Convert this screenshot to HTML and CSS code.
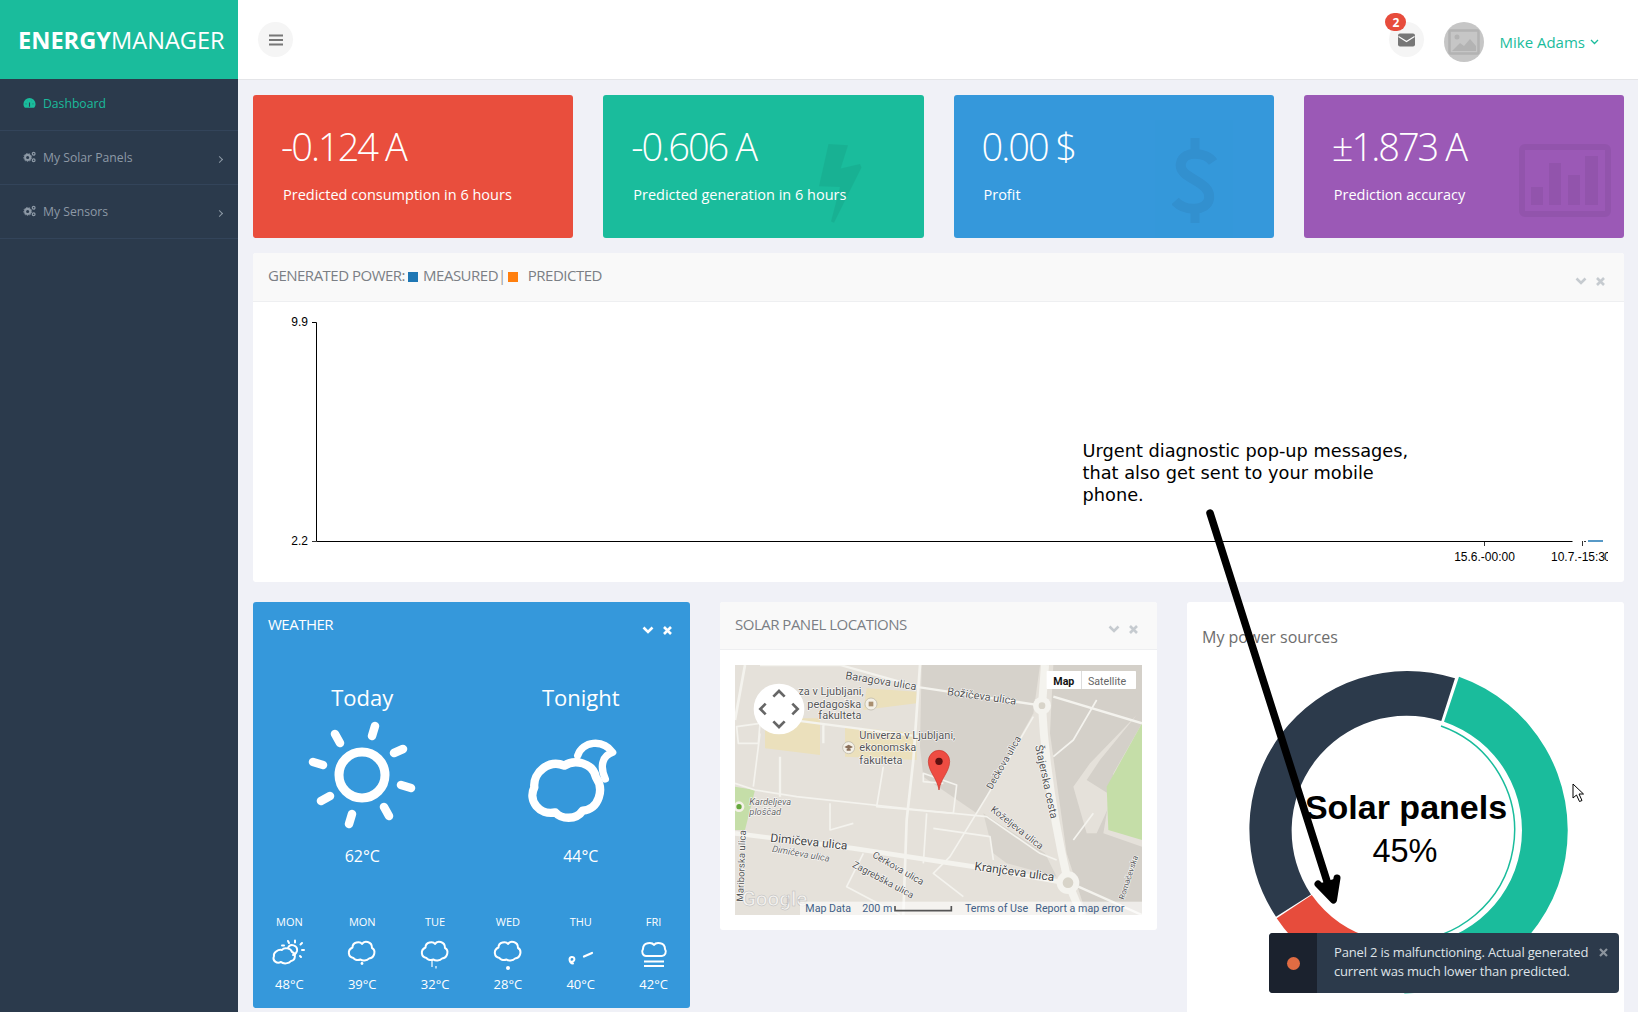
FILE: index.html
```html
<!DOCTYPE html>
<html lang="en">
<head>
<meta charset="utf-8">
<title>Energy Manager</title>
<link rel="stylesheet" href="styles.css">
</head>
<body>
<div class="app">
  <aside class="sidebar">
    <div class="brand"><b>ENERGY</b>MANAGER</div>
    <nav>
      <a class="nav-item active">
        <svg class="nav-icon" viewBox="0 0 14 12"><path d="M7 0.5A6.5 6.5 0 0 0 .5 7c0 1.5.5 2.8 1.3 3.8.2.3.5.4.8.4h8.8c.3 0 .6-.1.8-.4.8-1 1.3-2.3 1.3-3.8A6.500 6.500 0 0 0 7 .5z" fill="#1abc9c"/><path d="M7 10V5.5M3 7h.5M10.500 7h.5M4.500 3.500h.1M9.500 3.500h.1" stroke="#2c3e50" stroke-width="1.200" fill="none"/></svg>
        <span>Dashboard</span>
      </a>
      <a class="nav-item">
        <svg class="nav-icon" viewBox="0 0 14 13"><circle cx="5" cy="7" r="2.800" fill="none" stroke="#8d99a6" stroke-width="2.200"/><circle cx="5" cy="7" r="4.300" fill="none" stroke="#8d99a6" stroke-width="1" stroke-dasharray="1.500 1.500"/><circle cx="11.500" cy="3" r="1.500" fill="none" stroke="#8d99a6" stroke-width="1.300"/><circle cx="11.500" cy="10" r="1.500" fill="none" stroke="#8d99a6" stroke-width="1.300"/></svg>
        <span>My Solar Panels</span><i class="caret"></i>
      </a>
      <a class="nav-item">
        <svg class="nav-icon" viewBox="0 0 14 13"><circle cx="5" cy="7" r="2.800" fill="none" stroke="#8d99a6" stroke-width="2.200"/><circle cx="5" cy="7" r="4.300" fill="none" stroke="#8d99a6" stroke-width="1" stroke-dasharray="1.500 1.500"/><circle cx="11.500" cy="3" r="1.500" fill="none" stroke="#8d99a6" stroke-width="1.300"/><circle cx="11.500" cy="10" r="1.500" fill="none" stroke="#8d99a6" stroke-width="1.300"/></svg>
        <span>My Sensors</span><i class="caret"></i>
      </a>
    </nav>
  </aside>

  <div class="main">
    <header class="topbar">
      <button class="round-btn">
        <svg width="14" height="12" viewBox="0 0 14 12"><path d="M0 1.500h14M0 6h14M0 10.500h14" stroke="#777" stroke-width="2"/></svg>
      </button>
      <div class="top-right">
        <div class="mail">
          <span class="round-btn">
            <svg width="17" height="14" viewBox="0 0 17 14"><rect width="17" height="13" y=".5" rx="2" fill="#777"/><path d="M.5 3.500l8 5 8-5" fill="none" stroke="#fff" stroke-width="1.100"/></svg>
          </span>
          <span class="badge">2</span>
        </div>
        <div class="avatar">
          <svg width="32" height="26" viewBox="0 0 32 26"><rect x="1.500" y="1.500" width="29" height="23" rx="1" fill="none" stroke="#b3b3b3" stroke-width="2.500"/><path d="M4 22l8-8 4 3 6-7 6 7v5z" fill="#b3b3b3"/><circle cx="9" cy="8" r="2.500" fill="#b3b3b3"/></svg>
        </div>
        <div class="user">Mike Adams<svg width="9" height="6" viewBox="0 0 9 6"><path d="M1 1l3.500 3.500L8 1" fill="none" stroke="#1abc9c" stroke-width="1.300"/></svg></div>
      </div>
    </header>

    <div class="content">
      <section class="kpis">
        <div class="kpi red">
          <div class="kpi-val">-0.124 A</div>
          <div class="kpi-lbl">Predicted consumption in 6 hours</div>
        </div>
        <div class="kpi green">
          <svg class="kpi-bg bolt" viewBox="0 0 43 103" preserveAspectRatio="none"><path d="M9.500 0L29 1.600 21.700 32 41 26l1.500 4.600L15 102.600 12 101l9-45-21-1z"/></svg>
          <div class="kpi-val">-0.606 A</div>
          <div class="kpi-lbl">Predicted generation in 6 hours</div>
        </div>
        <div class="kpi blue">
          <svg class="kpi-bg dollar" viewBox="0 0 46 85"><path d="M41 24C34 14 12 12 9 25c-4 16 31 17 28 36-2 12-24 13-34 2" fill="none" stroke="#000" stroke-width="10"/><path d="M23 0v14M23 71v14" stroke="#000" stroke-width="9"/></svg>
          <div class="kpi-val">0.00 $</div>
          <div class="kpi-lbl">Profit</div>
        </div>
        <div class="kpi purple">
          <svg class="kpi-bg bars" viewBox="0 0 92 73"><rect x="3" y="3" width="86" height="67" rx="3" fill="none" stroke="#000" stroke-width="6"/><path d="M12 43h12v18H12zM30 19h12v42H30zM49 31h12v30H49zM66 12h13v49H66z"/></svg>
          <div class="kpi-val">±1.873 A</div>
          <div class="kpi-lbl">Prediction accuracy</div>
        </div>
      </section>

      <section class="panel chart-panel">
        <div class="panel-head">
          <div class="panel-title">GENERATED POWER:<i class="sw sw-blue"></i>MEASURED<span class="sep">|</span><i class="sw sw-orange"></i><span class="pred">PREDICTED</span></div>
          <div class="tools">
            <svg width="12" height="9" viewBox="0 0 12 9"><path d="M1.500 1.500L6 6l4.500-4.500" fill="none" stroke="currentColor" stroke-width="2.600"/></svg>
            <svg width="9" height="9" viewBox="0 0 9 9"><path d="M1 1l7 7M8 1l-7 7" stroke="currentColor" stroke-width="2.600"/></svg>
          </div>
        </div>
        <svg class="chart" width="1371" height="280" viewBox="253 302 1371 280">
          <path d="M312 322.500h4.500V541.500H1572.500" fill="none" stroke="#000" stroke-width="1"/>
          <path d="M312 541.500h4M1484.500 541v5M1582.500 541v5M1584 541.500h2" fill="none" stroke="#000" stroke-width="1" opacity=".8"/>
          <path d="M1588 541h15" stroke="#1f77b4" stroke-width="1.500"/>
          <text class="tick" x="308" y="326" text-anchor="end">9.9</text>
          <text class="tick" x="308" y="545" text-anchor="end">2.2</text>
          <text class="tick" x="1484.500" y="561" text-anchor="middle">15.6.-00:00</text>
          <text class="tick" x="1551" y="561">10.7.-15:3</text>
          <text class="tick" x="1604" y="561">0</text>
          <rect x="1608" y="545" width="16" height="22" fill="#fff"/>
        </svg>
      </section>

      <section class="row3">
        <div class="panel weather">
          <div class="weather-head">
            <div class="weather-title">WEATHER</div>
            <div class="tools tools-white">
              <svg width="12" height="9" viewBox="0 0 12 9"><path d="M1.500 1.500L6 6l4.500-4.500" fill="none" stroke="currentColor" stroke-width="2.600"/></svg>
              <svg width="9" height="9" viewBox="0 0 9 9"><path d="M1 1l7 7M8 1l-7 7" stroke="currentColor" stroke-width="2.600"/></svg>
            </div>
          </div>
          <div class="wx-big">
            <div class="wx-col">
              <div class="wx-name">Today</div>
              <svg class="wx-icon" width="110" height="110" viewBox="-55 -55 110 110" fill="none" stroke="#fff" stroke-linecap="round">
                <circle r="23" stroke-width="9"/>
                <path stroke-width="8.500" d="M10 -39L13 -49M32 -22L41 -26M39 10L49 13M22 32L27 41M-10 39L-13 49M-32 21L-41 26M-39 -10L-49 -13M-22 -32L-27 -41"/>
              </svg>
              <div class="wx-temp">62°C</div>
            </div>
            <div class="wx-col">
              <div class="wx-name">Tonight</div>
              <svg class="wx-icon" width="110" height="110" viewBox="830 363 330 330" fill="none" stroke="#fff" stroke-width="25" stroke-linecap="round" stroke-linejoin="round">
                <path d="M945 500C975 480 1030 490 1040 535C1065 570 1050 630 1000 635C980 665 935 660 918 640C870 650 835 605 855 565C850 520 900 480 945 500Z"/>
                <path stroke-width="22" d="M985 470C1000 425 1060 420 1090 460C1060 470 1050 500 1068 540"/>
              </svg>
              <div class="wx-temp">44°C</div>
            </div>
          </div>
          <div class="wx-days">
            <div class="wx-day">
              <div class="d">MON</div>
              <svg class="wx-mini" viewBox="0 0 36 32" fill="none" stroke="#fff" stroke-width="2" stroke-linecap="round" stroke-linejoin="round">
                <path d="M11 11C13 8 20 9 21 13C25 14 25 21 20 22C18 25 12 25 10 23C6 25 1 22 3 17C2 14 7 10 11 11Z"/>
                <path d="M17 9C19 4 27 6 26 12C25 15 23 16 22 16"/>
                <path d="M11 6.500h2M17 2l1 2M24 1.500v2M31 4l-1.500 1.500M33 11h-2M30 18l-1-1"/>
              </svg>
              <div class="t">48°C</div>
            </div>
            <div class="wx-day">
              <div class="d">MON</div>
              <svg class="wx-mini" viewBox="0 0 36 32" fill="none" stroke="#fff" stroke-width="2" stroke-linejoin="round">
                <path d="M18 5C20 1.500 28 2 28 9C32 11 31 19 25 19.500C23 22 18 22 16.500 20.500C13 22 10 20 9.500 19C4 18 3 11 8.500 8.500C8.500 3 16 2 18 5Z"/>
                <circle cx="18" cy="24.500" r="1.400" fill="#fff" stroke="none"/>
              </svg>
              <div class="t">39°C</div>
            </div>
            <div class="wx-day">
              <div class="d">TUE</div>
              <svg class="wx-mini" viewBox="0 0 36 32" fill="none" stroke="#fff" stroke-width="2" stroke-linejoin="round">
                <path d="M18 5C20 1.500 28 2 28 9C32 11 31 19 25 19.500C23 22 18 22 16.500 20.500C13 22 10 20 9.500 19C4 18 3 11 8.500 8.500C8.500 3 16 2 18 5Z"/>
                <path d="M15 20v8M19 27v2.500" stroke-width="1.200"/>
              </svg>
              <div class="t">32°C</div>
            </div>
            <div class="wx-day">
              <div class="d">WED</div>
              <svg class="wx-mini" viewBox="0 0 36 32" fill="none" stroke="#fff" stroke-width="2" stroke-linejoin="round">
                <path d="M18 5C20 1.500 28 2 28 9C32 11 31 19 25 19.500C23 22 18 22 16.500 20.500C13 22 10 20 9.500 19C4 18 3 11 8.500 8.500C8.500 3 16 2 18 5Z"/>
                <circle cx="18" cy="29" r="2" fill="#fff" stroke="none"/>
              </svg>
              <div class="t">28°C</div>
            </div>
            <div class="wx-day">
              <div class="d">THU</div>
              <svg class="wx-mini" viewBox="0 0 36 32" fill="none" stroke="#fff" stroke-width="2" stroke-linecap="round">
                <path d="M9 22.500C12 23 12.500 17.500 8.500 18C5.500 18.500 6 24 10 24.500"/>
                <path d="M21 17.500L29 14" stroke-width="2.200"/>
              </svg>
              <div class="t">40°C</div>
            </div>
            <div class="wx-day">
              <div class="d">FRI</div>
              <svg class="wx-mini" viewBox="0 0 36 32" fill="none" stroke="#fff" stroke-width="2" stroke-linejoin="round">
                <path d="M18 6C20 3 29 3 29 10C31 13 29 17 26 17H10C7 17 5 13 7 10C7 3 16 3 18 6Z"/>
                <path d="M8 22.500h20M8 27h20"/>
              </svg>
              <div class="t">42°C</div>
            </div>
          </div>
        </div>

        <div class="panel map-panel">
          <div class="panel-head map-head">
            <div class="panel-title">SOLAR PANEL LOCATIONS</div>
            <div class="tools">
              <svg width="12" height="9" viewBox="0 0 12 9"><path d="M1.500 1.500L6 6l4.500-4.500" fill="none" stroke="currentColor" stroke-width="2.600"/></svg>
              <svg width="9" height="9" viewBox="0 0 9 9"><path d="M1 1l7 7M8 1l-7 7" stroke="currentColor" stroke-width="2.600"/></svg>
            </div>
          </div>
          <div class="map-wrap">
            <svg class="map" width="407" height="250" viewBox="45 195 1221 750">
              <rect x="45" y="195" width="1221" height="750" fill="#e5e1da"/>
              <path d="M605 195H960L940 340 800 590 770 640 610 530 600 440z" fill="#d6d2cb"/>
              <path d="M1000 195H1266V370L1180 520 1150 700 1266 740V945H1100L1040 760 990 400z" fill="#d4d0c9"/>
              <path d="M790 640L975 760 1010 830 860 790 820 760z" fill="#d8d4cd"/>
              <path d="M1250 345L1140 480 1100 540 1180 590 1130 700 1100 700 1060 560 1110 490z" fill="#e5e1da"/>
              <path d="M1266 370L1160 560 1165 690 1266 720z" fill="#c5dea8"/>
              <path d="M45 560L105 570 75 690H45z" fill="#c5dea8"/>
              <path d="M135 355H300V465L135 445zM375 380L590 400 590 480 375 470zM440 265L590 275V310L430 330z" fill="#ebe0bc"/>
              <g fill="none" stroke="#f4f3ee" stroke-linejoin="round">
                <path d="M975 195L966 317C975 500 1010 700 1045 850L1085 945" stroke-width="24"/>
                <path d="M45 700L400 745 760 800 1045 850" stroke-width="14"/>
                <path d="M1075 860L1266 945" stroke-width="7"/>
                <path d="M75 195L45 360M600 195L580 480 560 660 550 945" stroke-width="8"/>
                <path d="M120 195H360L600 262 966 317M1000 290L1266 370" stroke-width="7"/>
                <path d="M140 350L600 410M180 470V590M310 370V430" stroke-width="7"/>
                <path d="M45 550L105 570 230 590 600 630 800 650 960 760 1010 780" stroke-width="5"/>
                <path d="M940 350L800 590 690 770 640 820 730 890" stroke-width="5"/>
                <path d="M120 400L100 560M50 380L120 370 115 430H55zM490 500L470 620 700 640 710 555 610 520 610 545 670 550M330 610V690L400 670M620 640L610 790M640 685L810 710 820 780M430 760L380 860 540 945M1060 720L1120 640M1130 300L1060 420 1000 470" stroke-width="5"/>
              </g>
              <g fill="#f4f3ee"><circle cx="966" cy="317" r="27"/><circle cx="1044" cy="848" r="34"/></g>
              <g fill="#d8d4c9"><circle cx="966" cy="317" r="10"/><circle cx="1044" cy="848" r="16"/></g>
              <g class="mt">
                <text x="375" y="237" transform="rotate(9 375 237)">Baragova ulica</text>
                <text x="680" y="285" transform="rotate(8 680 285)">Božičeva ulica</text>
                <text x="235" y="286">za v Ljubljani,</text>
                <text x="262" y="323">pedagoška</text>
                <text x="295" y="358">fakulteta</text>
                <text x="418" y="416">Univerza v Ljubljani,</text>
                <text x="418" y="454">ekonomska</text>
                <text x="418" y="491">fakulteta</text>
                <text x="815" y="570" transform="rotate(-60 815 570)" class="mt-sm">Dečkova ulica</text>
                <text x="945" y="437" transform="rotate(78 945 437)">Štajerska cesta</text>
                <text x="810" y="632" transform="rotate(38 810 632)" class="mt-sm">Koželjeva ulica</text>
                <text x="88" y="615" class="mt-it">Kardeljeva</text>
                <text x="88" y="645" class="mt-it">ploščad</text>
                <text x="150" y="725" transform="rotate(6 150 725)" class="mt-lg">Dimičeva ulica</text>
                <text x="155" y="755" transform="rotate(10 155 755)" class="mt-it">Dimičeva ulica</text>
                <text x="762" y="810" transform="rotate(8 762 810)" class="mt-lg">Kranjčeva ulica</text>
                <text x="455" y="770" transform="rotate(30 455 770)" class="mt-sm">Cerkova ulica</text>
                <text x="395" y="800" transform="rotate(28 395 800)" class="mt-sm">Zagrebška ulica</text>
                <text x="70" y="905" transform="rotate(-88 70 905)" class="mt-sm">Mariborska ulica</text>
                <text x="1212" y="900" transform="rotate(-72 1212 900)" class="mt-xs">Romačevska</text>
              </g>
              <circle cx="453" cy="312" r="18" fill="#f4f1e8" stroke="#b5b0a5" stroke-width="2"/>
              <rect x="446" y="305" width="14" height="14" fill="#a98f70"/>
              <circle cx="386" cy="443" r="18" fill="#f4f1e8" stroke="#b5b0a5" stroke-width="2"/>
              <path d="M373 441l13-7 13 7-13 7zM380 447h12v5h-12z" fill="#8a6f5a"/>
              <circle cx="57" cy="620" r="16" fill="#f4f1e8"/>
              <circle cx="57" cy="620" r="8" fill="#65a83c"/>
              <text class="google" x="65" y="918">Google</text>
              <path d="M657 570C652 535 625 515 625 484A32 33 0 0 1 689 484C689 515 662 535 657 570Z" fill="#ee4c42" stroke="#c9352c" stroke-width="2"/>
              <circle cx="657" cy="484" r="11" fill="#5e1010"/>
              <circle cx="177" cy="327" r="76" fill="#fff"/>
              <path d="M160 290L177 273 194 290M137 311L121 327 137 343M217 311L233 327 217 343M160 364L177 381 194 364" fill="none" stroke="#666" stroke-width="8"/>
              <rect x="980" y="213" width="268" height="54" rx="2" fill="#fff"/>
              <path d="M1084.500 213v54" stroke="#ccc" stroke-width="2"/>
              <text class="mc-b" x="1000" y="254">Map</text>
              <text class="mc" x="1104" y="254">Satellite</text>
              <rect x="240" y="905" width="1026" height="40" fill="#fff" fill-opacity=".6"/>
              <g class="md">
                <text x="256" y="936">Map Data</text>
                <text x="427" y="936">200 m</text>
                <text x="735" y="936">Terms of Use</text>
                <text x="946" y="936">Report a map error</text>
              </g>
              <path d="M525 918v14H694V918" fill="none" stroke="#555" stroke-width="5"/>
            </svg>
          </div>
        </div>

        <div class="panel power">
          <div class="power-title">My power sources</div>
          <svg class="donut" width="437" height="400" viewBox="1187 645 437 400">
            <path fill="#2c3a4b" d="M1276 916.700A158 158 0 0 1 1455 678.300L1441.300 721A115 115 0 0 0 1311 894.500Z"/>
            <path fill="#1abc9c" d="M1459 676.700A163 163 0 0 1 1404.300 993.400V945.200A114.800 114.800 0 0 0 1444 721.700Z"/>
            <path fill="none" stroke="#1abc9c" stroke-width="1.500" d="M1441 726A110.700 110.700 0 0 1 1404.300 941"/>
            <path fill="#e74c3c" d="M1276.700 918.300L1311.700 895A115 115 0 0 0 1375 939L1345 975A158 158 0 0 1 1276.700 918.300Z"/>
            <text class="donut-a" x="1406" y="819" text-anchor="middle">Solar panels</text>
            <text class="donut-b" x="1405" y="862" text-anchor="middle">45%</text>
          </svg>
        </div>
      </section>
    </div>
  </div>
</div>

<div class="note">Urgent diagnostic pop-up messages,<br>that also get sent to your mobile<br>phone.</div>

<svg class="arrow" width="160" height="410" viewBox="1195 500 160 410">
  <path d="M1210 513L1332 897" fill="none" stroke="#000" stroke-width="7.500" stroke-linecap="round"/>
  <path d="M1318 884L1333.500 900 1337 878" fill="none" stroke="#000" stroke-width="7" stroke-linecap="round" stroke-linejoin="round"/>
  <path d="M1318 884L1333.500 900 1337 878z" fill="#000"/>
</svg>

<svg class="cursor" width="13" height="20" viewBox="0 0 13 20"><path d="M1 1v14l3.500-3 3 6.500 2.500-1-3-6.500h4.500z" fill="#fff" stroke="#000" stroke-width="1"/></svg>

<div class="toast">
  <div class="toast-side"><i class="dot"></i></div>
  <div class="toast-body">Panel 2 is malfunctioning. Actual generated current was much lower than predicted.</div>
  <svg class="toast-x" width="9" height="9" viewBox="0 0 9 9"><path d="M1 1l7 7M8 1l-7 7" stroke="#8c949d" stroke-width="2.200"/></svg>
</div>
</body>
</html>
```

FILE: styles.css
```css
* { box-sizing: border-box; }
html, body { margin: 0; height: 1012px; overflow: hidden; }
body { background: #f0f1f7; font-family: "Open Sans", "Liberation Sans", sans-serif; color: #666; position: relative; }
svg { display: block; }

.app { display: flex; height: 1012px; }

/* sidebar */
.sidebar { width: 238px; flex: none; background: #2b3a4c; }
.brand { height: 79px; background: #1abc9c; color: #fff; font-size: 23.600px; display: flex; align-items: center; padding-left: 18px; }
.brand b { font-weight: 700; }
.nav-item { height: 54px; display: flex; align-items: center; padding: 0 16px 1px 23px; border-bottom: 1px solid #33445a; color: #8d99a6; font-size: 12.200px; }
.nav-item:first-child { height: 52px; padding-bottom: 3px; }
.nav-item.active { color: #1abc9c; }
.nav-icon { width: 13px; height: 12px; margin-right: 7px; flex: none; }
.nav-item span { flex: 1; }
.caret { width: 5px; height: 5px; border-top: 1px solid #8d99a6; border-right: 1px solid #8d99a6; transform: rotate(45deg); margin-top: 4px; }

/* top bar */
.main { flex: 1; min-width: 0; }
.topbar { height: 80px; background: #fff; border-bottom: 1px solid #e4e5e8; display: flex; align-items: center; justify-content: space-between; padding: 0 39px 0 20px; }
.round-btn { width: 35px; height: 35px; border-radius: 50%; background: #f5f5f5; border: 0; padding: 0; display: flex; align-items: center; justify-content: center; }
.top-right { display: flex; align-items: center; }
.mail { position: relative; margin-right: 20px; }
.badge { position: absolute; left: -4px; top: -9px; width: 21px; height: 18px; border-radius: 9px; background: #e74c3c; color: #fff; font-size: 12px; font-weight: 700; display: flex; align-items: center; justify-content: center; }
.avatar { width: 40px; height: 40px; border-radius: 50%; background: #c6c6c6; display: flex; align-items: center; justify-content: center; margin-top: 5px; margin-right: 15px; }
.user { color: #1abc9c; font-size: 15px; display: flex; align-items: center; gap: 5px; margin-top: 4px; }

/* content */
.content { padding: 15px 14px 0 15px; }
.kpis { display: grid; grid-template-columns: repeat(4, 1fr); gap: 30px; margin-bottom: 15px; }
.kpi { position: relative; height: 143px; border-radius: 3px; color: #fff; padding: 26px 28px 0 28px; overflow: hidden; }
.red { background: #e94e3d; }
.green { background: #1abc9c; }
.blue { background: #3598db; }
.purple { background: #9b59b6; }
.kpi-val { font-size: 38px; font-weight: 300; line-height: 50px; letter-spacing: -2px; position: relative; }
.kpi-lbl { font-size: 14.500px; line-height: 20px; margin-top: 14px; margin-left: 2px; position: relative; }
.kpi-bg { position: absolute; fill: #000; opacity: .05; }
.bolt { left: 216px; top: 49px; width: 43px; height: 79px; }
.dollar { left: 218px; top: 43px; width: 46px; height: 85px; }
.bars { left: 215px; top: 49px; width: 92px; height: 73px; }

/* panels */
.panel { background: #fff; border-radius: 3px; }
.panel-head { height: 49px; background: #f9f9f9; border-bottom: 1px solid #eeeff1; border-radius: 3px 3px 0 0; display: flex; align-items: center; justify-content: space-between; padding: 0 19px 0 15px; }
.panel-title { font-size: 15px; color: #7b7f85; display: flex; align-items: center; letter-spacing: -.5px; margin-bottom: 4px; }
.tools { display: flex; align-items: center; gap: 9px; color: #c6cbd0; margin-top: 8px; }
.tools-white { color: #fff; }
.sw { width: 10px; height: 10px; margin: 4px 5px 0 3px; }
.sw-blue { background: #1f77b4; }
.sw-orange { background: #ff7f0e; margin-left: 2px; margin-right: 6px; }
.sep { margin: 0; color: #999; }
.pred { margin-left: 4px; }
.chart-panel { height: 329px; margin-bottom: 20px; }
.tick { font: 12px "Liberation Sans", Arial, sans-serif; fill: #000; }

.row3 { display: grid; grid-template-columns: repeat(3, 1fr); gap: 30px; align-items: start; }

/* weather */
.weather { background: #3598db; color: #fff; height: 406px; }
.weather-head { height: 48px; display: flex; align-items: center; justify-content: space-between; padding: 0 18px 0 15px; }
.weather-title { font-size: 15px; letter-spacing: -.5px; margin-bottom: 4px; }
.wx-big { display: grid; grid-template-columns: 1fr 1fr; margin-top: 32px; }
.wx-col { display: flex; flex-direction: column; align-items: center; }
.wx-name { font-size: 22px; line-height: 30px; }
.wx-icon { margin-top: 8px; }
.wx-temp { font-size: 16px; line-height: 22px; margin-top: 15px; }
.wx-days { display: grid; grid-template-columns: repeat(6, 1fr); margin-top: 47px; text-align: center; }
.wx-day { display: flex; flex-direction: column; align-items: center; }
.d { font-size: 11px; line-height: 16px; }
.wx-mini { width: 36px; height: 32px; margin-top: 9px; }
.t { font-size: 13px; line-height: 18px; margin-top: 4px; }

/* map */
.map-head { height: 48px; }
.map-wrap { padding: 15px; }
.map text { font-family: Roboto, "Liberation Sans", sans-serif; }
.mt { font-size: 33px; fill: #555; stroke: #fff; stroke-width: 3px; paint-order: stroke; }
.mt-sm { font-size: 29px; }
.mt-xs { font-size: 24px; }
.mt-lg { font-size: 36px; fill: #444; }
.mt-it { font-size: 28px; font-style: italic; fill: #666; }
.google { font-size: 62px; fill: #fff; fill-opacity: .6; stroke: #bbb; stroke-width: 1.500px; font-weight: 500; }
.mc-b { font-size: 32px; font-weight: 700; fill: #111; }
.mc { font-size: 32px; fill: #666; }
.md { font-size: 32px; fill: #3f5f87; }

/* power */
.power { height: 420px; overflow: hidden; }
.power-title { font-size: 16px; color: #6d6d6d; padding: 24px 15px 0; line-height: 22px; height: 43px; margin-bottom: 0; }
.donut-a { font: 700 34px "Liberation Sans", Arial, sans-serif; fill: #000; }
.donut-b { font: 32.500px "Liberation Sans", Arial, sans-serif; fill: #000; }

/* overlays */
.note { position: absolute; left: 1082.500px; top: 440px; font: 17.750px/22px "DejaVu Sans", sans-serif; color: #000; }
.arrow { position: absolute; left: 1195px; top: 500px; }
.cursor { position: absolute; left: 1572px; top: 783px; }
.toast { position: absolute; left: 1269px; top: 933px; width: 350px; height: 60px; background: #2c3a4b; border-radius: 4px; display: flex; overflow: hidden; color: #dfe3e8; }
.toast-side { width: 48px; flex: none; background: #1b222e; display: flex; align-items: center; justify-content: center; }
.dot { width: 13px; height: 13px; border-radius: 50%; background: #e06c43; }
.toast-body { font-size: 13px; line-height: 19px; padding: 10px 0 0 17px; width: 282px; letter-spacing: -.17px; }
.toast-x { position: absolute; right: 11px; top: 15px; }
```
